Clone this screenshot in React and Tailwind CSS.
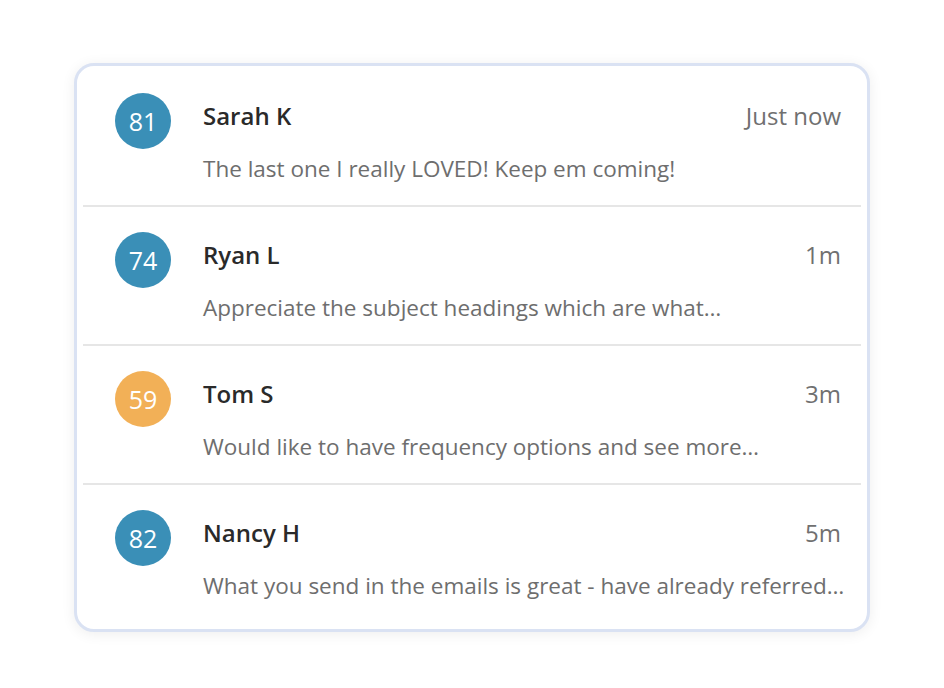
import React from 'react';

const comments = [
  { score: 81, name: 'Sarah K', time: 'Just now', text: 'The last one I really LOVED! Keep em coming!', color: 'bg-[#3a8fb7]' },
  { score: 74, name: 'Ryan L', time: '1m', text: 'Appreciate the subject headings which are what…', color: 'bg-[#3a8fb7]' },
  { score: 59, name: 'Tom S', time: '3m', text: 'Would like to have frequency options and see more…', color: 'bg-[#f2b057]' },
  { score: 82, name: 'Nancy H', time: '5m', text: 'What you send in the emails is great - have already referred…', color: 'bg-[#3a8fb7]' },
];

const Row = ({ item, last }) => (
  <div className={`flex pl-[32px] pr-[20px] pt-[25px] pb-[21px] ${last ? '' : 'border-b-2 border-[#e6e6e6]'}`}>
    <div className={`w-14 h-14 shrink-0 rounded-full ${item.color} flex items-center justify-center text-white text-[25px] leading-none`}>
      {item.score}
    </div>
    <div className="flex-1 ml-[32px] pt-[7px] min-w-0">
      <div className="flex items-center justify-between">
        <span className="text-[24px] leading-[32px] font-semibold text-[#2a2a2a]">{item.name}</span>
        <span className="text-[24px] leading-[32px] text-[#707070]">{item.time}</span>
      </div>
      <p className="mt-[22px] text-[22.5px] leading-[30px] text-[#6e6e6e] whitespace-nowrap">{item.text}</p>
    </div>
  </div>
);

export default function App() {
  return (
    <div className="w-[944px] h-[688px] bg-white pt-[63px] flex justify-center" style={{ fontFamily: '"Open Sans", sans-serif' }}>
      <div className="w-[796px] h-[569px] border-[3px] border-[#dae2f3] rounded-[20px] bg-white shadow-[0_2px_14px_rgba(0,0,0,0.07)] px-[6px] pt-[2px] pb-[7px]">
        {comments.map((c, i) => (
          <Row key={c.name} item={c} last={i === comments.length - 1} />
        ))}
      </div>
    </div>
  );
}
